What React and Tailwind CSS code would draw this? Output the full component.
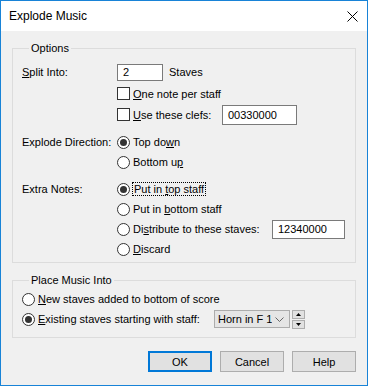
import React from "react";

const U = ({ children }) => <span className="underline underline-offset-[1px] decoration-1">{children}</span>;

const Radio = ({ checked, children }) => (
  <span className="flex items-center whitespace-nowrap">
    <span className="w-[13px] h-[13px] rounded-full border border-[#333] bg-white flex items-center justify-center shrink-0">
      {checked && <span className="w-[7px] h-[7px] rounded-full bg-[#333]" />}
    </span>
    <span className="ml-[3px]">{children}</span>
  </span>
);

const Check = ({ children }) => (
  <span className="flex items-center whitespace-nowrap">
    <span className="w-[13px] h-[13px] border border-[#333] bg-white shrink-0" />
    <span className="ml-[3px]">{children}</span>
  </span>
);

const Field = ({ value, className }) => (
  <div className={`border border-[#7a7a7a] bg-white flex items-center pl-[5px] ${className}`}>{value}</div>
);

const Button = ({ children, primary }) => (
  <button
    className={`w-[64px] h-[21px] bg-[#e1e1e1] flex items-center justify-center ${
      primary ? "border-2 border-[#0078d7]" : "border border-[#adadad]"
    }`}
  >
    {children}
  </button>
);

export default function App() {
  return (
    <div className="w-[368px] h-[386px] border border-[#1883d7] bg-[#f0f0f0] flex flex-col text-[11px] leading-[16px] text-black [font-family:'Liberation_Sans',Arial,sans-serif] overflow-hidden whitespace-nowrap">
      {/* title bar */}
      <div className="h-[30px] bg-white flex items-center justify-between pl-[8px] pr-[9px] shrink-0">
        <span className="text-[12px]">Explode Music</span>
        <svg width="11" height="11" viewBox="0 0 11 11">
          <path d="M0.5 0.5 L10.5 10.5 M10.5 0.5 L0.5 10.5" stroke="#000" strokeWidth="1" />
        </svg>
      </div>

      <div className="px-[11px] pt-[9px] flex flex-col">
        {/* Options */}
        <fieldset className="border border-[#dcdcdc] pl-[9px] pt-[5px] pb-[3px]">
          <legend className="ml-[7px] px-[2px]">Options</legend>

          <div className="grid grid-cols-[95px_1fr]">
            <div className="h-[22px] flex items-center">
              <span>
                <U>S</U>plit Into:
              </span>
            </div>
            <div className="h-[22px] flex items-center">
              <Field value="2" className="w-[46px] h-[17px]" />
              <span className="ml-[6px]">Staves</span>
            </div>

            <div />
            <div className="h-[21px] flex items-center">
              <Check>
                <U>O</U>ne note per staff
              </Check>
            </div>

            <div />
            <div className="h-[21px] flex items-center">
              <span className="w-[105px]">
                <Check>
                  <U>U</U>se these clefs:
                </Check>
              </span>
              <Field value="00330000" className="w-[75px] h-[20px]" />
            </div>

            <div className="h-[20px] mt-[7px] flex items-center">Explode Direction:</div>
            <div className="h-[20px] mt-[7px] flex items-center">
              <Radio checked>
                Top do<U>w</U>n
              </Radio>
            </div>

            <div />
            <div className="h-[20px] flex items-center">
              <Radio>
                Bottom u<U>p</U>
              </Radio>
            </div>

            <div className="h-[20px] mt-[7px] flex items-center">Extra Notes:</div>
            <div className="h-[20px] mt-[7px] flex items-center">
              <span className="flex items-center">
                <span className="w-[13px] h-[13px] rounded-full border border-[#333] bg-white flex items-center justify-center">
                  <span className="w-[7px] h-[7px] rounded-full bg-[#333]" />
                </span>
                <span className="ml-[2px] px-[1px] h-[14px] flex items-center border border-dotted border-black">
                  <span>
                    Put in <U>t</U>op staff
                  </span>
                </span>
              </span>
            </div>

            <div />
            <div className="h-[20px] flex items-center">
              <Radio>
                Put in <U>b</U>ottom staff
              </Radio>
            </div>

            <div />
            <div className="h-[20px] flex items-center">
              <span className="w-[155px]">
                <Radio>
                  Di<U>s</U>tribute to these staves:
                </Radio>
              </span>
              <Field value="12340000" className="w-[73px] h-[19px]" />
            </div>

            <div />
            <div className="h-[20px] flex items-center">
              <Radio>
                <U>D</U>iscard
              </Radio>
            </div>
          </div>
        </fieldset>

        {/* Place Music Into */}
        <fieldset className="border border-[#dcdcdc] pl-[9px] pt-[1px] pb-[8px] mt-[9px]">
          <legend className="ml-[7px] px-[2px]">Place Music Into</legend>
          <div className="h-[20px] flex items-center">
            <Radio>
              <U>N</U>ew staves added to bottom of score
            </Radio>
          </div>
          <div className="h-[20px] flex items-center">
            <span className="w-[192px]">
              <Radio checked>
                <U>E</U>xisting staves starting with staff:
              </Radio>
            </span>
            <div className="w-[76px] h-[18px] bg-[#e5e5e5] border border-[#acacac] flex items-center pl-[3px] pr-[5px] justify-between">
              <span className="w-[54px] overflow-hidden">Horn in F 1,</span>
              <svg width="9" height="5" viewBox="0 0 9 5">
                <path d="M0.5 0.5 L4.5 4.5 L8.5 0.5" stroke="#666" fill="none" strokeWidth="1" />
              </svg>
            </div>
            <div className="ml-[2px] flex flex-col gap-[1px]">
              <div className="w-[13px] h-[9px] bg-[#e1e1e1] border border-[#adadad] flex items-center justify-center">
                <svg width="5" height="3" viewBox="0 0 5 3">
                  <path d="M2.5 0 L5 3 L0 3 Z" fill="#000" />
                </svg>
              </div>
              <div className="w-[13px] h-[9px] bg-[#e1e1e1] border border-[#adadad] flex items-center justify-center">
                <svg width="5" height="3" viewBox="0 0 5 3">
                  <path d="M0 0 L5 0 L2.5 3 Z" fill="#000" />
                </svg>
              </div>
            </div>
          </div>
        </fieldset>

        {/* Buttons */}
        <div className="flex justify-end gap-[8px] mt-[13px]">
          <Button primary>OK</Button>
          <Button>Cancel</Button>
          <Button>Help</Button>
        </div>
      </div>
    </div>
  );
}
